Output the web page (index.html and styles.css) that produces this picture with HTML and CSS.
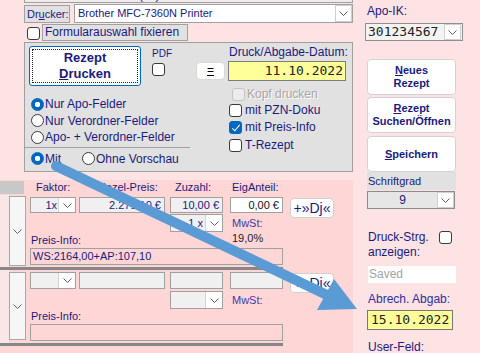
FILE: index.html
```html
<!DOCTYPE html>
<html lang="de">
<head>
    <meta charset="UTF-8">
    <title>Rezept drucken</title>
    <link rel="stylesheet" href="styles.css">
</head>
<body>
<div class="page">
    <div class="left">
        <div class="top-strip"><span>Kürzel: Etiketten 40x(11) Muster 10</span></div>

        <div class="printer-row">
            <div class="lbl-box">Dr<u>u</u>cker:</div>
            <div class="combo printer">
                <span class="combo-text">Brother MFC-7360N Printer</span>
                <span class="drop"><svg width="9" height="5" viewBox="0 0 9 5"><polyline points="0.5,0.5 4.5,4.5 8.5,0.5" fill="none" stroke="#606060"/></svg></span>
            </div>
        </div>

        <div class="fix-row">
            <span class="cb"></span>
            <div class="lbl-box fix">Formularauswahl fixieren</div>
        </div>

        <div class="group">
            <div class="g-left">
                <div class="g-top">
                    <div class="print-btn"><span>Rezept</span><span><u>D</u>rucken</span></div>
                    <div class="pdf">
                        <div class="pdf-lbl">PDF</div>
                        <span class="cb"></span>
                    </div>
                    <div class="eq-btn"><u>=</u></div>
                </div>
                <div class="radios">
                    <div class="opt"><span class="rb on"></span>Nur Apo-Felder</div>
                    <div class="opt"><span class="rb"></span>Nur Verordner-Felder</div>
                    <div class="opt"><span class="rb"></span>Apo- + Verordner-Felder</div>
                </div>
                <div class="g-sep"></div>
                <div class="opt mit-row">
                    <span class="mit"><span class="rb on"></span>Mit</span>
                    <span class="rb"></span>Ohne Vorschau
                </div>
            </div>
            <div class="g-right">
                <div class="date-lbl">Druck/Abgabe-Datum:</div>
                <div class="date-box">11.10.2022</div>
                <div class="chk kopf"><span class="cb off"></span>Kopf drucken</div>
                <div class="chk"><span class="cb"></span>mit PZN-Doku</div>
                <div class="chk tall"><span class="cb on"></span>mit Preis-Info</div>
                <div class="chk tall"><span class="cb"></span>T-Rezept</div>
            </div>
        </div>

        <div class="lower">
            <div class="cols lower-head">
                <div class="gband"></div>
                <div class="h-faktor">Faktor:</div>
                <div class="h-ein">Einzel-Preis:</div>
                <div class="h-zu">Zuzahl:</div>
                <div class="h-eig">EigAnteil:</div>
            </div>

            <div class="cols row row1">
                <div class="gut"></div>
                <div class="cell"><svg width="9" height="5" viewBox="0 0 9 5"><polyline points="0.5,0.5 4.5,4.5 8.5,0.5" fill="none" stroke="#606060"/></svg></div>
                <div class="combo f-faktor">
                    <span class="combo-text">1x</span>
                    <span class="drop"><svg width="9" height="5" viewBox="0 0 9 5"><polyline points="0.5,0.5 4.5,4.5 8.5,0.5" fill="none" stroke="#606060"/></svg></span>
                </div>
                <div class="inp f-ein">2.271,10 €</div>
                <div class="inp f-zu">10,00 €</div>
                <div class="inp f-eig white">0,00 €</div>
                <div class="dj">+»Dj«</div>
                <div class="combo f-small">
                    <span class="combo-text">1 x</span>
                    <span class="drop"><svg width="9" height="5" viewBox="0 0 9 5"><polyline points="0.5,0.5 4.5,4.5 8.5,0.5" fill="none" stroke="#606060"/></svg></span>
                </div>
                <div class="mwst">MwSt:</div>
                <div class="pct">19,0%</div>
                <div class="pi-lbl">Preis-Info:</div>
                <div class="pi-field">WS:2164,00+AP:107,10</div>
            </div>
            <div class="sep"></div>

            <div class="cols row row2">
                <div class="gut"></div>
                <div class="cell"><svg width="9" height="5" viewBox="0 0 9 5"><polyline points="0.5,0.5 4.5,4.5 8.5,0.5" fill="none" stroke="#606060"/></svg></div>
                <div class="combo f-faktor">
                    <span class="combo-text"></span>
                    <span class="drop"><svg width="9" height="5" viewBox="0 0 9 5"><polyline points="0.5,0.5 4.5,4.5 8.5,0.5" fill="none" stroke="#606060"/></svg></span>
                </div>
                <div class="inp f-ein"></div>
                <div class="inp f-zu"></div>
                <div class="inp f-eig"></div>
                <div class="dj">+»Dj«</div>
                <div class="combo f-small">
                    <span class="combo-text"></span>
                    <span class="drop"><svg width="9" height="5" viewBox="0 0 9 5"><polyline points="0.5,0.5 4.5,4.5 8.5,0.5" fill="none" stroke="#606060"/></svg></span>
                </div>
                <div class="mwst">MwSt:</div>
                <div class="pi-lbl">Preis-Info:</div>
                <div class="pi-field"></div>
            </div>
            <div class="sep"></div>
        </div>
    </div>

    <div class="right">
        <div class="apo-lbl">Apo-IK:</div>
        <div class="combo apo-combo">
            <span class="combo-text">301234567</span>
            <span class="drop"><svg width="9" height="5" viewBox="0 0 9 5"><polyline points="0.5,0.5 4.5,4.5 8.5,0.5" fill="none" stroke="#606060"/></svg></span>
        </div>
        <div class="side-btn first"><span><u>N</u>eues</span><span>Rezept</span></div>
        <div class="side-btn"><span><u>R</u>ezept</span><span>Suchen/Öffnen</span></div>
        <div class="side-btn third"><span><u>S</u>peichern</span></div>
        <div class="schrift">Schriftgrad</div>
        <div class="combo size-sel">
            <span class="combo-text">9</span>
            <span class="drop"><svg width="9" height="5" viewBox="0 0 9 5"><polyline points="0.5,0.5 4.5,4.5 8.5,0.5" fill="none" stroke="#606060"/></svg></span>
        </div>
        <div class="druck-strg">
            <div class="ds-text">Druck-Strg.<br>anzeigen:</div>
            <span class="cb"></span>
        </div>
        <div class="saved">Saved</div>
        <div class="abrech">Abrech. Abgab:</div>
        <div class="abgab">15.10.2022</div>
        <div class="user-feld">User-Feld:</div>
    </div>
</div>

<svg class="arrow" width="480" height="353" viewBox="0 0 480 353">
    <line x1="56" y1="166" x2="327" y2="295" stroke="#5b9bd5" stroke-width="10" stroke-linecap="round"/>
    <polygon points="334,279 357,309 317,310" fill="#5b9bd5"/>
</svg>
</body>
</html>
```

FILE: styles.css
```css
* {
    box-sizing: border-box;
}
body {
    margin: 0;
    width: 480px;
    height: 353px;
    overflow: hidden;
    position: relative;
    background: #fde3e3;
    color: #1a1a7e;
    font-family: "Liberation Sans", Arial, sans-serif;
    font-size: 12px;
}
.page {
    display: flex;
}
.left {
    width: 353px;
}
.right {
    width: 127px;
    padding-left: 12px;
}

/* shared controls */
.cb {
    display: inline-block;
    flex: none;
    width: 13px;
    height: 13px;
    border: 1px solid #3a3a3a;
    border-radius: 3px;
    background: #fff;
}
.cb.on {
    position: relative;
    background: #0067c0;
    border-color: #0067c0;
}
.cb.on::after {
    content: "";
    position: absolute;
    left: 4px;
    top: 1px;
    width: 3px;
    height: 7px;
    border: solid #fff;
    border-width: 0 1px 1px 0;
    transform: rotate(40deg);
}
.cb.off {
    border-color: #c4c4c4;
    background: #ececec;
}
.rb {
    display: inline-block;
    flex: none;
    width: 13px;
    height: 13px;
    border: 1px solid #3a3a3a;
    border-radius: 50%;
    background: #fff;
    margin-right: 1px;
}
.rb.on {
    border-color: #0067c0;
    background: radial-gradient(circle, #fff 0 2.5px, #0067c0 3px);
}
.combo {
    display: flex;
    border: 1px solid #a0a0a0;
    background: #f0f0f0;
}
.combo-text {
    flex: 1;
    overflow: hidden;
    white-space: nowrap;
}
.drop {
    flex: none;
    width: 17px;
    background: #fff;
    border-left: 1px solid #d4d4d4;
    display: flex;
    align-items: center;
    justify-content: center;
}

/* top of left column */
.top-strip {
    margin-left: 24px;
    height: 3px;
    border: 1px solid #a0a0a0;
    border-top: 0;
    background: #ececec;
    overflow: hidden;
}
.top-strip span {
    display: block;
    margin-top: -11px;
    padding-left: 4px;
    line-height: 13px;
    white-space: nowrap;
}
.printer-row {
    display: flex;
    margin-top: 1px;
    height: 19px;
}
.lbl-box {
    margin: 1px 0 0 24px;
    width: 46px;
    height: 18px;
    border: 1px solid #a0a0a0;
    background: #e1e1e1;
    font-size: 11px;
    line-height: 16px;
    padding-left: 2px;
    white-space: nowrap;
}
.printer {
    margin-left: 4px;
    flex: 1;
    background: #fff;
    font-size: 11px;
    line-height: 17px;
}
.printer .combo-text {
    padding-left: 3px;
}
.printer .drop {
    margin: 0 0 0 0;
    border: 1px solid #cfcfcf;
}
.fix-row {
    display: flex;
    margin-top: 1px;
    height: 17px;
}
.fix-row .cb {
    margin: 3px 0 0 27px;
}
.fix-row .lbl-box {
    margin: 0 0 0 2px;
    width: 146px;
    height: 17px;
    font-size: 12px;
    line-height: 15px;
}

/* group box */
.group {
    display: flex;
    margin: 1px 0 0 24px;
    height: 130px;
    border: 1px solid #a0a0a0;
    background: #e1e1e1;
}
.g-left {
    width: 202px;
}
.g-top {
    display: flex;
    margin-top: 3px;
    height: 40px;
}
.print-btn {
    margin-left: 4px;
    width: 112px;
    height: 40px;
    border: 1px solid #0067c0;
    border-radius: 3px;
    background: #fff;
    outline: 1px dotted #222;
    outline-offset: -4px;
    font-size: 13px;
    font-weight: bold;
    line-height: 16px;
    display: flex;
    flex-direction: column;
    align-items: center;
    justify-content: center;
}
.pdf {
    margin-left: 11px;
    width: 20px;
}
.pdf-lbl {
    margin-top: 2px;
    font-size: 10px;
    line-height: 11px;
}
.pdf .cb {
    margin-top: 4px;
}
.eq-btn {
    margin: 16px 0 0 24px;
    width: 29px;
    height: 18px;
    background: #fff;
    border: 1px solid #d8d8d8;
    border-radius: 4px;
    text-align: center;
    line-height: 15px;
    color: #000;
}
.radios {
    margin-top: 10px;
}
.opt {
    display: flex;
    align-items: center;
    height: 16px;
    padding-left: 6px;
    white-space: nowrap;
}
.radios .opt:nth-child(2) {
    height: 17px;
}
.g-sep {
    margin-top: 2px;
    width: 165px;
    height: 1px;
    background: #a0a0a0;
}
.mit-row {
    margin-top: 2px;
    height: 17px;
}
.mit {
    display: flex;
    align-items: center;
    width: 51px;
}
.g-right {
    margin-left: 1px;
    width: 123px;
}
.date-lbl {
    margin-top: 2px;
    padding-left: 1px;
    line-height: 14px;
    white-space: nowrap;
}
.date-box {
    margin-top: 2px;
    width: 118px;
    height: 20px;
    border: 1px solid #7d7d7d;
    background: #ffff99;
    font-family: "DejaVu Sans Mono", "Liberation Mono", monospace;
    font-size: 13px;
    line-height: 18px;
    text-align: right;
    padding-right: 2px;
    color: #222;
}
.chk {
    display: flex;
    align-items: center;
    height: 16px;
    padding-left: 1px;
    white-space: nowrap;
}
.chk .cb {
    margin-right: 3px;
}
.chk.tall {
    height: 18px;
}
.chk.kopf {
    margin-top: 5px;
    padding-left: 4px;
    color: #a6a6a6;
    text-shadow: 1px 1px 0 #fff;
}
.chk.kopf .cb {
    margin-right: 2px;
}

/* lower rows */
.lower {
    margin-top: 8px;
    height: 173px;
    background: #ffd6d6;
    font-size: 11px;
}
.cols {
    display: grid;
    grid-template-columns: 9px 17px 4px 46px 3px 86px 5px 53px 7px 53px 7px 44px;
}
.lower-head {
    height: 15px;
    line-height: 15px;
    white-space: nowrap;
}
.gband {
    grid-column: 1 / 4;
    width: 24px;
    margin: 1px 0;
    background: #c8c8c8;
}
.h-faktor {
    grid-column: 4;
    padding-left: 6px;
}
.h-ein {
    grid-column: 6;
    padding-left: 17px;
}
.h-zu {
    grid-column: 8;
    padding-left: 5px;
}
.h-eig {
    grid-column: 10;
    padding-left: 2px;
}
.row1 {
    grid-template-rows: 2px 16px 1px 18px 16px 17px 2px;
}
.row2 {
    grid-template-rows: 2px 17px 2px 18px 15px 17px 2px;
}
.sep {
    width: 283px;
    height: 3px;
    background: #878787;
}
.gut {
    grid-column: 1;
    grid-row: 1 / -1;
    background: #fae6e6;
}
.cell {
    grid-column: 2;
    grid-row: 1 / -1;
    margin: 1px 0;
    border: 1px solid #a8a8a8;
    background: #f6f6f6;
    display: flex;
    align-items: center;
    justify-content: center;
}
.row2 .cell {
    margin: 2px 0 3px;
}
.f-faktor {
    grid-column: 4;
    grid-row: 2;
    line-height: 14px;
}
.f-faktor .combo-text {
    text-align: right;
    padding-right: 1px;
}
.inp {
    grid-row: 2;
    border: 1px solid #a0a0a0;
    background: #f0f0f0;
    text-align: right;
    padding-right: 3px;
    line-height: 14px;
    white-space: nowrap;
    overflow: hidden;
}
.inp.white {
    background: #fff;
    color: #111;
}
.f-ein {
    grid-column: 6;
}
.f-zu {
    grid-column: 8;
}
.f-eig {
    grid-column: 10;
}
.dj {
    grid-column: 12;
    grid-row: 2 / 5;
    align-self: start;
    margin-top: 1px;
    height: 20px;
    background: #fff;
    border: 1px solid #d0d0d0;
    border-radius: 4px;
    font-size: 14px;
    line-height: 18px;
    text-align: center;
    white-space: nowrap;
}
.f-small {
    grid-column: 8;
    grid-row: 4;
    line-height: 16px;
}
.f-small .combo-text {
    text-align: right;
    padding-right: 2px;
}
.mwst {
    grid-column: 10;
    grid-row: 4;
    padding-left: 2px;
    line-height: 18px;
    color: #3b3ba6;
}
.pct {
    grid-column: 10;
    grid-row: 5;
    padding-left: 2px;
    line-height: 12px;
    color: #222;
}
.pi-lbl {
    grid-column: 4 / 9;
    grid-row: 5;
    padding-left: 1px;
    line-height: 16px;
}
.row2 .pi-lbl {
    line-height: 15px;
}
.pi-field {
    grid-column: 4 / 11;
    grid-row: 6;
    border: 1px solid #a0a0a0;
    padding-left: 2px;
    line-height: 15px;
    white-space: nowrap;
}

/* right column */
.apo-lbl {
    margin: 4px 0 0 2px;
    line-height: 14px;
}
.apo-combo {
    margin-top: 5px;
    width: 98px;
    height: 18px;
    border-color: #8f8f8f;
    background: #f3f3f3;
}
.apo-combo .combo-text {
    padding-left: 2px;
    font-family: "DejaVu Sans Mono", "Liberation Mono", monospace;
    font-size: 13px;
    line-height: 16px;
    color: #222;
}
.apo-combo .drop {
    margin-right: 1px;
    border: 1px solid #cfcfcf;
}
.side-btn {
    margin: 2px 0 0 2px;
    width: 89px;
    height: 36px;
    background: #fff;
    border: 1px solid #d4d4d4;
    border-radius: 4px;
    font-size: 11px;
    font-weight: bold;
    line-height: 13px;
    display: flex;
    flex-direction: column;
    align-items: center;
    justify-content: center;
}
.side-btn.first {
    margin-top: 18px;
}
.side-btn.third {
    margin-top: 3px;
}
.schrift {
    margin-left: 2px;
    width: 89px;
    height: 18px;
    background: #e1e1e1;
    font-size: 11px;
    line-height: 18px;
    padding-left: 1px;
}
.size-sel {
    margin: 1px 0 0 2px;
    width: 88px;
    height: 18px;
    border-color: #8c8c8c;
    background: #e6e6e6;
    line-height: 16px;
}
.size-sel .combo-text {
    text-align: center;
}
.size-sel .drop {
    border: 1px solid #cfcfcf;
}
.druck-strg {
    display: flex;
    margin: 21px 0 0 3px;
}
.ds-text {
    width: 71px;
    line-height: 15px;
}
.druck-strg .cb {
    margin-top: 1px;
}
.saved {
    margin: 6px 0 0 3px;
    width: 88px;
    height: 17px;
    background: #fff;
    color: #a3a3a3;
    padding-left: 1px;
    line-height: 17px;
}
.abrech {
    margin: 9px 0 0 3px;
    line-height: 14px;
    color: #2e2e9e;
}
.abgab {
    margin: 4px 0 0 2px;
    width: 86px;
    height: 20px;
    border: 1px solid #777;
    background: #ffff99;
    font-family: "DejaVu Sans Mono", "Liberation Mono", monospace;
    font-size: 13px;
    line-height: 18px;
    padding-left: 3px;
    color: #222;
}
.user-feld {
    margin: 10px 0 0 3px;
    line-height: 14px;
}

.arrow {
    position: absolute;
    left: 0;
    top: 0;
    pointer-events: none;
}
```
